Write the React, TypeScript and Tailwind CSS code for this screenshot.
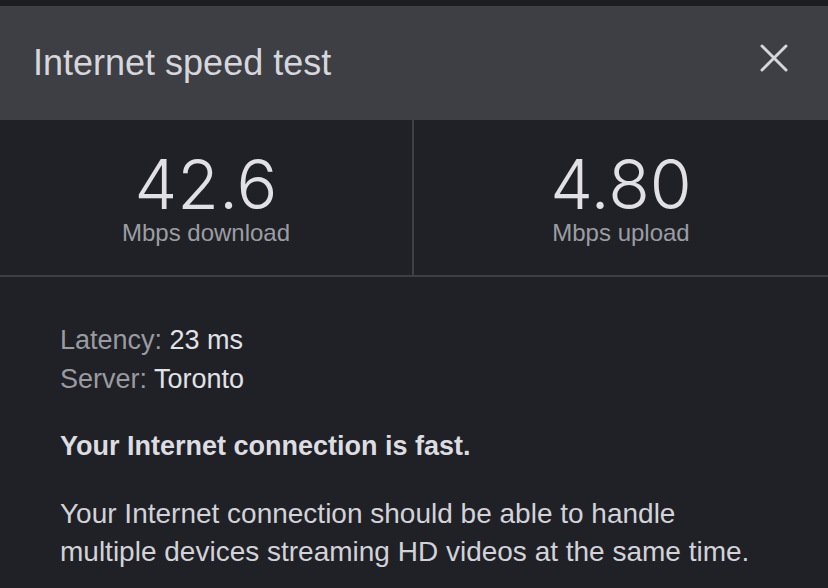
export default function App() {
  return (
    <div
      className="h-[588px] w-[828px] overflow-hidden bg-[#202126] text-[#d9d9de]"
      style={{ fontFamily: '"Liberation Sans", Arial, sans-serif' }}
    >
      <div className="h-[6px] bg-[#1c1d21]" />

      <header className="flex h-[114px] items-center justify-between bg-[#3d3f44] pl-[33px] pr-[40px]">
        <h1 className="text-[36px] leading-none text-[#d6d6dc]">Internet speed test</h1>
        <svg width="28" height="28" viewBox="0 0 28 28" className="mb-[10px] text-[#d6d6dc]">
          <path d="M2 2 L26 26 M26 2 L2 26" stroke="currentColor" strokeWidth="3" strokeLinecap="round" />
        </svg>
      </header>

      <div className="grid h-[157px] grid-cols-2 border-b-2 border-[#3f4045]">
        <div className="border-r-2 border-[#3f4045]">
          <Stat value="42.6" label="Mbps download" />
        </div>
        <Stat value="4.80" label="Mbps upload" />
      </div>

      <div className="px-[60px] pt-[44px]">
        <p className="text-[27px] leading-[39px]">
          <span className="text-[#9a9ba1]">Latency: </span>
          <span className="text-[#e2e2e7]">23 ms</span>
        </p>
        <p className="text-[27px] leading-[39px]">
          <span className="text-[#9a9ba1]">Server: </span>
          <span className="text-[#e2e2e7]">Toronto</span>
        </p>
        <p className="mt-[28px] text-[27px] font-semibold leading-[39px] text-[#dcdce1]">
          Your Internet connection is fast.
        </p>
        <p className="mt-[29px] text-[28px] leading-[38px] text-[#d2d2d8]">
          Your Internet connection should be able to handle
          <br />
          multiple devices streaming HD videos at the same time.
        </p>
      </div>
    </div>
  );
}

function Stat({ value, label }: { value: string; label: string }) {
  return (
    <div className="flex h-full flex-col items-center pt-[32px]">
      <div
        className="text-[68px] font-light leading-[64px] text-[#e0e0e5]"
        style={{ fontFamily: '"Inter", "Liberation Sans", sans-serif' }}
      >
        {value}
      </div>
      <div className="mt-[3px] text-[24px] leading-[28px] text-[#9c9da3]">{label}</div>
    </div>
  );
}
